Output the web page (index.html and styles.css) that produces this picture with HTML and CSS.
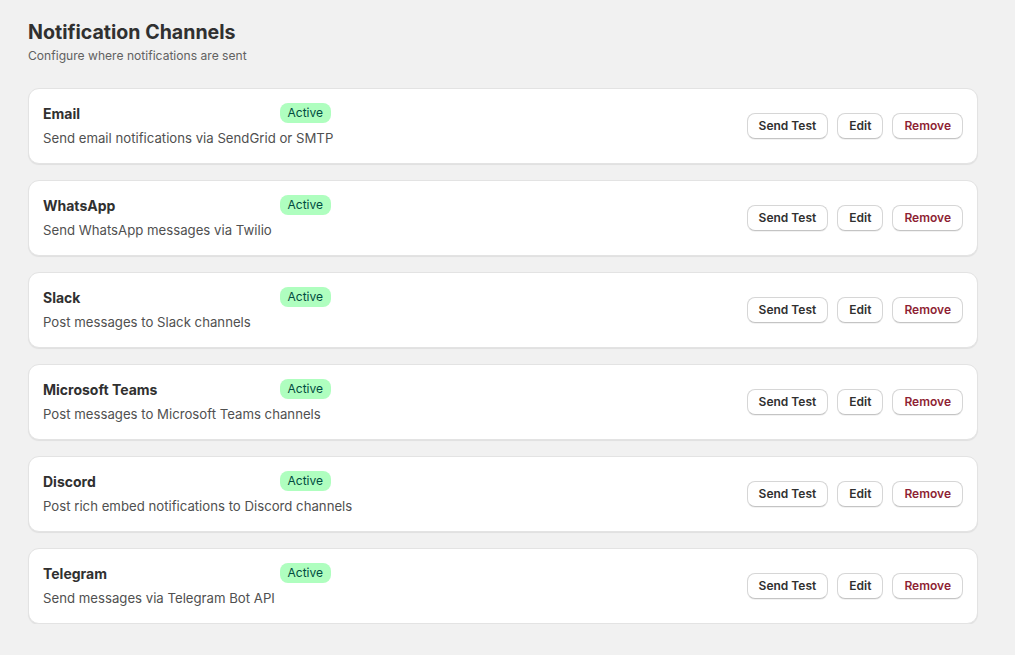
FILE: index.html
```html
<!DOCTYPE html>
<html lang="en">
<head>
<meta charset="utf-8">
<title>Notification Channels</title>
<link rel="stylesheet" href="styles.css">
</head>
<body>
<div class="page">
    <h1 class="title">Notification Channels</h1>
    <p class="subtitle">Configure where notifications are sent</p>
    <div class="channels">
        <div class="card">
            <div class="info">
                <div class="head"><span class="name">Email</span><span class="badge">Active</span></div>
                <div class="desc">Send email notifications via SendGrid or SMTP</div>
            </div>
            <div class="actions"><button>Send Test</button><button>Edit</button><button class="danger">Remove</button></div>
        </div>
        <div class="card">
            <div class="info">
                <div class="head"><span class="name">WhatsApp</span><span class="badge">Active</span></div>
                <div class="desc">Send WhatsApp messages via Twilio</div>
            </div>
            <div class="actions"><button>Send Test</button><button>Edit</button><button class="danger">Remove</button></div>
        </div>
        <div class="card">
            <div class="info">
                <div class="head"><span class="name">Slack</span><span class="badge">Active</span></div>
                <div class="desc">Post messages to Slack channels</div>
            </div>
            <div class="actions"><button>Send Test</button><button>Edit</button><button class="danger">Remove</button></div>
        </div>
        <div class="card">
            <div class="info">
                <div class="head"><span class="name">Microsoft Teams</span><span class="badge">Active</span></div>
                <div class="desc">Post messages to Microsoft Teams channels</div>
            </div>
            <div class="actions"><button>Send Test</button><button>Edit</button><button class="danger">Remove</button></div>
        </div>
        <div class="card">
            <div class="info">
                <div class="head"><span class="name">Discord</span><span class="badge">Active</span></div>
                <div class="desc">Post rich embed notifications to Discord channels</div>
            </div>
            <div class="actions"><button>Send Test</button><button>Edit</button><button class="danger">Remove</button></div>
        </div>
        <div class="card">
            <div class="info">
                <div class="head"><span class="name">Telegram</span><span class="badge">Active</span></div>
                <div class="desc">Send messages via Telegram Bot API</div>
            </div>
            <div class="actions"><button>Send Test</button><button>Edit</button><button class="danger">Remove</button></div>
        </div>
    </div>
</div>
</body>
</html>
```
FILE: styles.css
```css
body {
    margin: 0;
    background: #f1f1f1;
    font-family: Inter, "Liberation Sans", sans-serif;
    color: #303030;
}
.page {
    width: 950px;
    padding: 20px 0 0 28px;
}
.title {
    margin: 0;
    font-size: 19.6px;
    line-height: 24px;
    font-weight: 700;
}
.subtitle {
    margin: 4px 0 0 0;
    font-size: 12.1px;
    line-height: 16px;
    color: #616161;
}
.channels {
    margin-top: 24px;
    display: flex;
    flex-direction: column;
    gap: 16px;
}
.card {
    display: flex;
    align-items: center;
    justify-content: space-between;
    background: #fff;
    border: 1px solid #e3e3e3;
    border-radius: 11px;
    box-shadow: 0 1px 1px rgba(0, 0, 0, 0.07);
    padding: 14px 14px 15px 14px;
}
.head {
    width: 288px;
    display: flex;
    align-items: center;
    justify-content: space-between;
    height: 20px;
}
.name {
    font-size: 14px;
    font-weight: 700;
}
.badge {
    background: #affebf;
    color: #014b40;
    font-size: 12px;
    line-height: 20px;
    padding: 0 8px;
    border-radius: 8px;
}
.desc {
    margin-top: 5px;
    font-size: 13.2px;
    line-height: 20px;
    color: #505050;
}
.actions {
    display: flex;
    gap: 9px;
}
button {
    font-family: inherit;
    font-size: 12px;
    font-weight: 600;
    color: #303030;
    background: #fff;
    border: 1px solid #d6d6d6;
    border-bottom-color: #c4c4c4;
    border-radius: 8px;
    box-shadow: 0 1px 0 rgba(0, 0, 0, 0.05);
    height: 26px;
    padding: 0 11px;
}
button.danger {
    color: #8e1f33;
}
```
